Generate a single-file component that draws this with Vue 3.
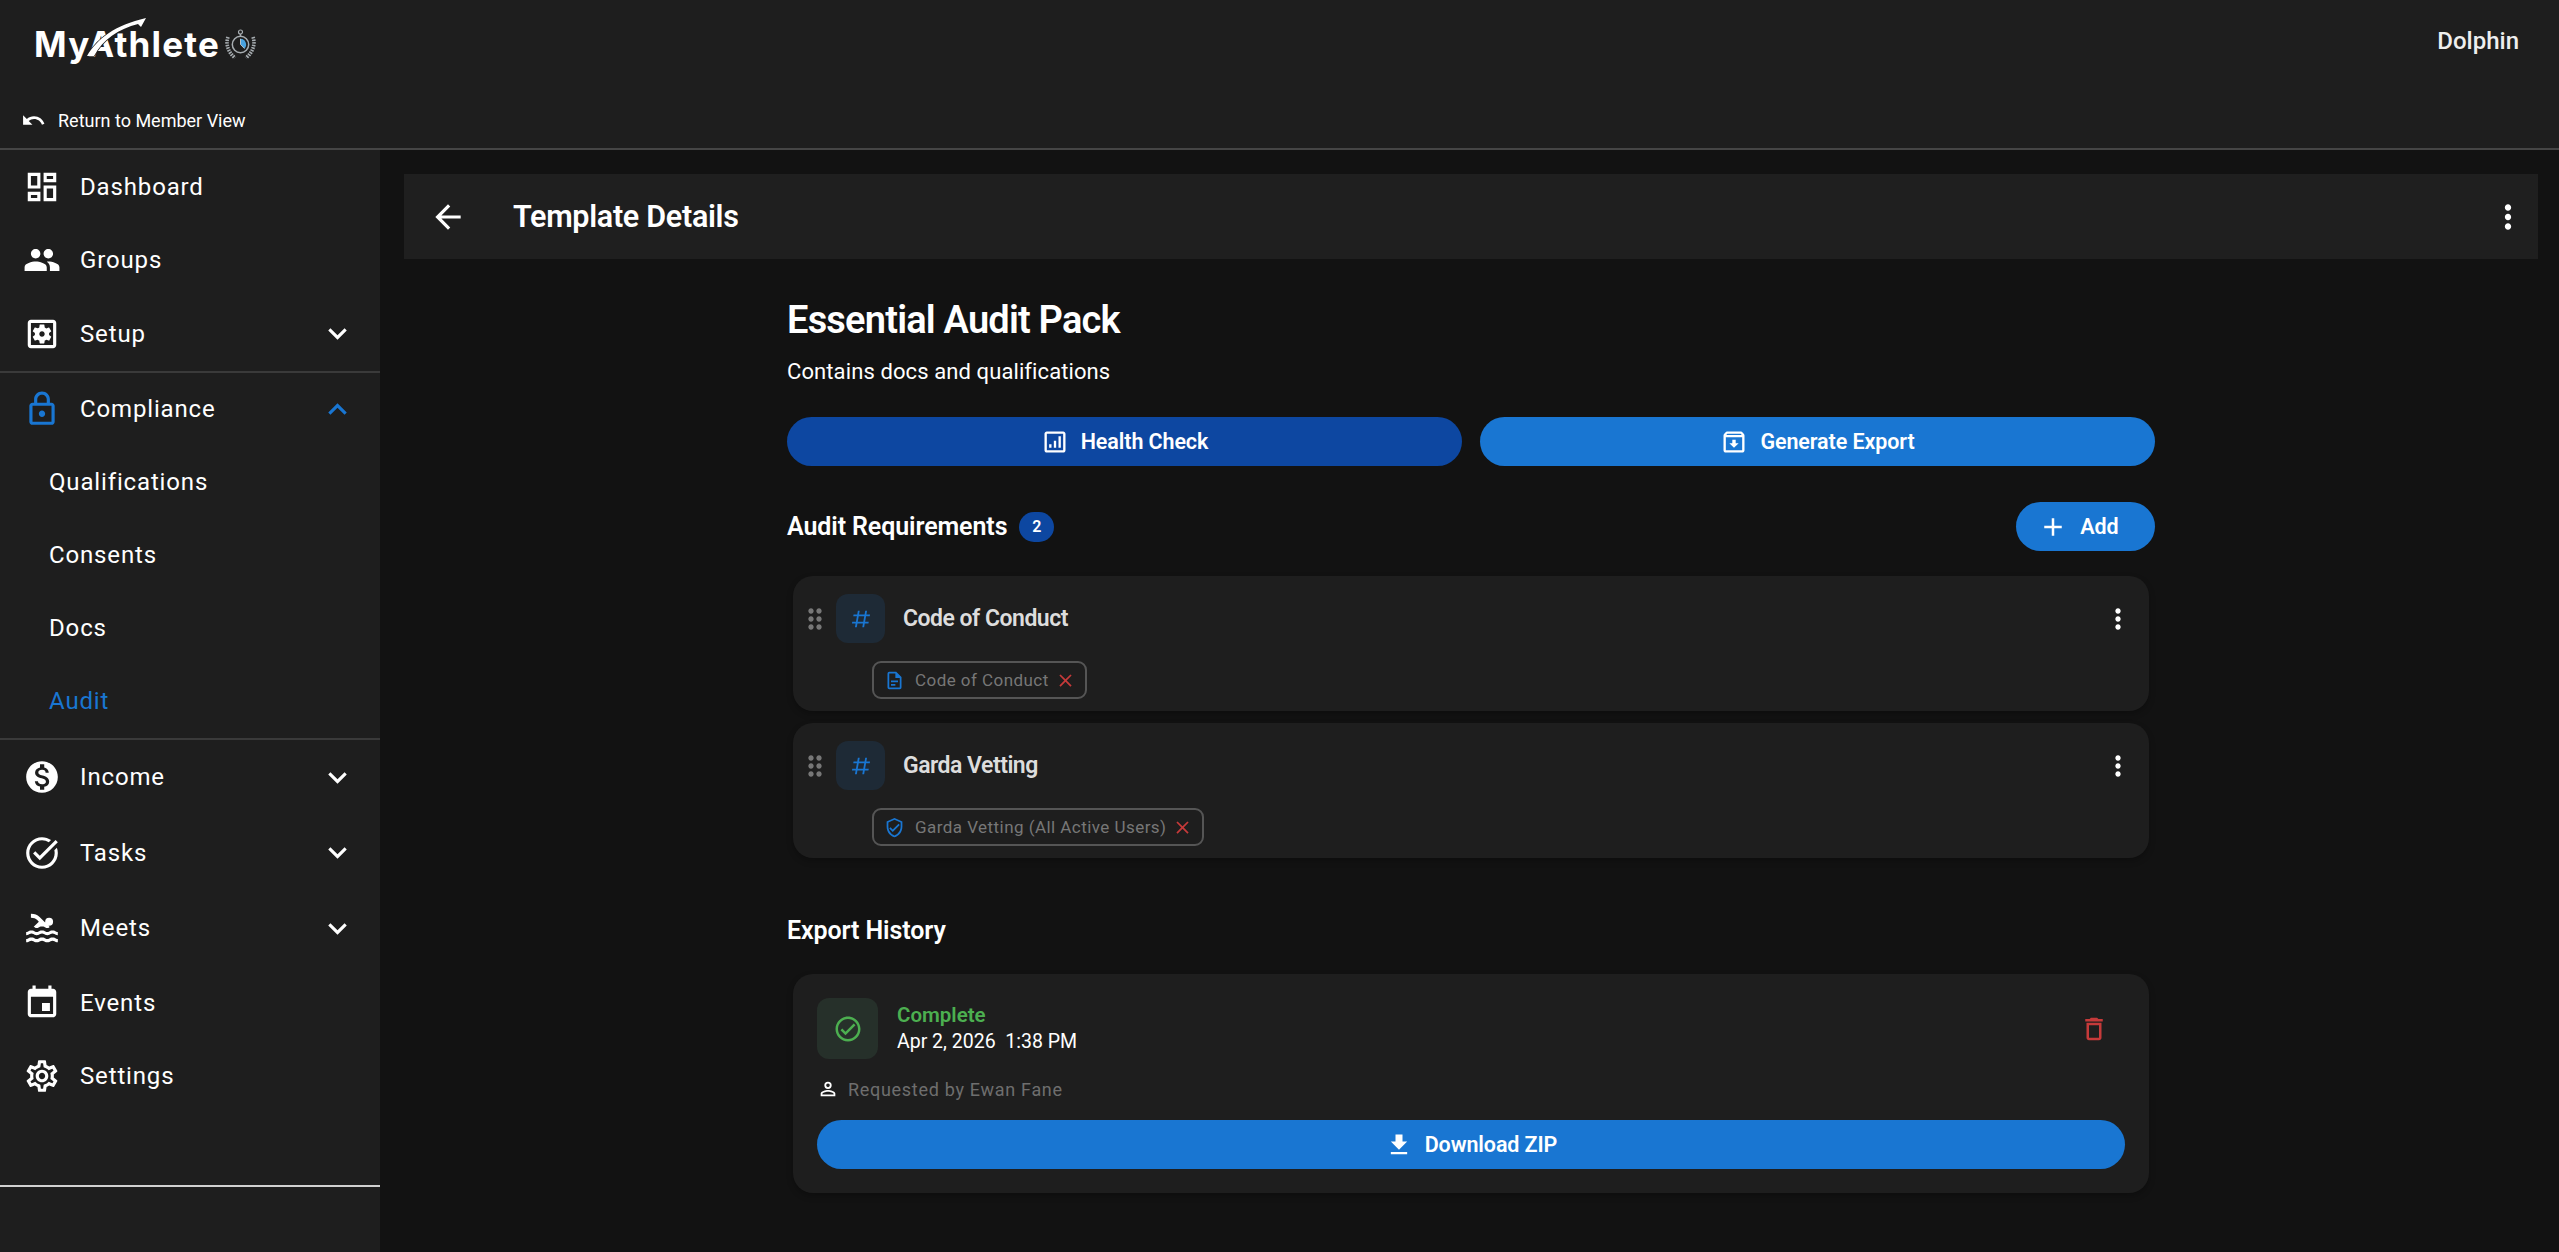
<template>
  <div class="app">
    <header class="topbar">
      <div class="brand-row">
        <div class="logo">
          <span class="logo-text">MyAthlete</span>
          <svg class="swoosh" viewBox="0 0 60 40"><path d="M0 39C10 22 28 8 59 1L54 10L51 7C32 12 16 22 7 39Z" fill="#fff" stroke="#1e1e1e" stroke-width="1.500" paint-order="stroke" /></svg>
          <svg class="watch" viewBox="0 0 31 31">
            <circle cx="15.500" cy="15.500" r="8.200" fill="none" stroke="#a7adb1" stroke-width="1.500" />
            <path d="M15.500 9.800V15.500L19.500 19.600A5.800 5.800 0 0 0 15.500 9.800Z" fill="#4aa3e0" />
            <path d="M15.500 9.800V15.500L19.500 19.600" fill="none" stroke="#d6dadd" stroke-width="0.800" />
            <circle cx="15.500" cy="3" r="2" fill="none" stroke="#a7adb1" stroke-width="1.200" />
            <path d="M15.500 5V7.300" stroke="#a7adb1" stroke-width="1.500" />
            <path d="M3 8C.5 15 3 23 10 29M28 8C30.500 15 28 23 21 29" fill="none" stroke="#a7adb1" stroke-width="3.600" stroke-dasharray="1.600 1" />
          </svg>
        </div>
        <div class="org">Dolphin</div>
      </div>
      <div class="return-row">
        <svg class="return-icon" viewBox="0 0 24 24"><path d="M12.500 8c-2.650 0-5.050.990-6.900 2.600L2 7v9h9l-3.620-3.620c1.390-1.160 3.160-1.880 5.120-1.880 3.540 0 6.550 2.310 7.600 5.500l2.370-.780C21.080 11.030 17.150 8 12.500 8z" /></svg>
        <span>Return to Member View</span>
      </div>
    </header>

    <div class="body">
      <aside class="sidebar">
        <nav class="nav">
          <div v-for="item in navItems" :key="item.label" :class="{ 'nav-group': item.open }">
            <div class="nav-item" :class="{ active: item.open, tall: item.tall }">
              <svg class="nav-icon" viewBox="0 0 24 24"><path :d="item.icon" /></svg>
              <span class="nav-label">{{ item.label }}</span>
              <svg v-if="item.chevron" class="nav-chevron" viewBox="0 0 24 24">
                <path :d="item.open ? chevronUp : chevronDown" />
              </svg>
            </div>
            <div v-for="child in item.children" :key="child" class="nav-child" :class="{ current: child === 'Audit' }">{{ child }}</div>
          </div>
        </nav>
        <div class="sidebar-rule"></div>
      </aside>

      <main class="main">
        <div class="page-bar">
          <svg class="back-icon" viewBox="0 0 24 24"><path d="M20 11H7.830l5.590-5.590L12 4l-8 8 8 8 1.410-1.410L7.830 13H20v-2z" /></svg>
          <h1 class="page-title">Template Details</h1>
          <svg class="bar-dots" viewBox="0 0 24 24"><path :d="dotsPath" /></svg>
        </div>

        <section class="content">
          <h2 class="pack-title">Essential Audit Pack</h2>
          <p class="pack-desc">Contains docs and qualifications</p>

          <div class="action-row">
            <button class="pill dark">
              <svg class="pill-icon" viewBox="0 0 24 24"><path d="M19 3H5c-1.100 0-2 .9-2 2v14c0 1.100.9 2 2 2h14c1.100 0 2-.9 2-2V5c0-1.100-.9-2-2-2zm0 16H5V5h14v14zM7 14h2v3H7zm4-3h2v6h-2zm4-4h2v10h-2z" /></svg>
              Health Check
            </button>
            <button class="pill">
              <svg class="pill-icon" viewBox="0 0 24 24"><path d="M20.540 5.230l-1.390-1.680C18.880 3.210 18.470 3 18 3H6c-.47 0-.88.21-1.160.55L3.460 5.230C3.170 5.570 3 6.020 3 6.500V19c0 1.100.9 2 2 2h14c1.100 0 2-.9 2-2V6.500c0-.48-.17-.93-.46-1.270zM6.240 5h11.520l.83 1H5.420l.82-1zM5 19V8h14v11H5zm8.450-9h-2.900v3H8l4 4 4-4h-2.550z" /></svg>
              Generate Export
            </button>
          </div>

          <div class="section-head">
            <h3 class="section-title">Audit Requirements</h3>
            <span class="count">2</span>
            <button class="pill add">
              <svg class="pill-icon" viewBox="0 0 24 24"><path d="M19 13h-6v6h-2v-6H5v-2h6V5h2v6h6v2z" /></svg>
              Add
            </button>
          </div>

          <div class="req-list">
            <div v-for="req in requirements" :key="req.name" class="card req">
              <div class="req-top">
                <svg class="drag" viewBox="0 0 24 24"><path d="M11 18c0 1.100-.9 2-2 2s-2-.9-2-2 .9-2 2-2 2 .9 2 2zm-2-8c-1.100 0-2 .9-2 2s.9 2 2 2 2-.9 2-2-.9-2-2-2zm0-6c-1.100 0-2 .9-2 2s.9 2 2 2 2-.9 2-2-.9-2-2-2zm6 4c1.100 0 2-.9 2-2s-.9-2-2-2-2 .9-2 2 .9 2 2 2zm0 2c-1.100 0-2 .9-2 2s.9 2 2 2 2-.9 2-2-.9-2-2-2zm0 6c-1.100 0-2 .9-2 2s.9 2 2 2 2-.9 2-2-.9-2-2-2z" /></svg>
                <div class="tag-box">
                  <svg viewBox="0 0 24 24"><path d="M5.410 21L6.120 17H2.120L2.470 15H6.470L7.530 9H3.530L3.880 7H7.880L8.590 3H10.590L9.880 7H15.880L16.590 3H18.590L17.880 7H21.880L21.530 9H17.530L16.470 15H20.470L20.120 17H16.120L15.410 21H13.410L14.120 17H8.120L7.410 21H5.410M9.530 9L8.470 15H14.470L15.530 9H9.530Z" /></svg>
                </div>
                <span class="req-name">{{ req.name }}</span>
                <svg class="dots" viewBox="0 0 24 24"><path :d="dotsPath" /></svg>
              </div>
              <div class="chip">
                <svg class="chip-icon" viewBox="0 0 24 24"><path :d="req.icon" /></svg>
                <span>{{ req.chip }}</span>
                <svg class="chip-close" viewBox="0 0 24 24"><path d="M19 6.410L17.590 5 12 10.590 6.410 5 5 6.410 10.590 12 5 17.590 6.410 19 12 13.410 17.590 19 19 17.590 13.410 12z" /></svg>
              </div>
            </div>
          </div>

          <h3 class="section-title export-title">Export History</h3>

          <div class="card export">
            <div class="export-top">
              <div class="status-box">
                <svg viewBox="0 0 24 24"><path d="M12 2C6.500 2 2 6.500 2 12S6.500 22 12 22 22 17.500 22 12 17.500 2 12 2M12 20C7.590 20 4 16.410 4 12S7.590 4 12 4 20 7.590 20 12 16.410 20 12 20M16.590 7.580L10 14.170L7.410 11.590L6 13L10 17L18 9L16.590 7.580Z" /></svg>
              </div>
              <div class="status-text">
                <div class="status">Complete</div>
                <div class="when">Apr 2, 2026&nbsp; 1:38 PM</div>
              </div>
              <svg class="trash" viewBox="0 0 24 24"><path d="M6 19c0 1.100.9 2 2 2h8c1.100 0 2-.9 2-2V7H6v12zM8 9h8v10H8V9zm7.500-5l-1-1h-5l-1 1H5v2h14V4z" /></svg>
            </div>
            <div class="requested">
              <svg viewBox="0 0 24 24"><path d="M12 4A4 4 0 0 1 16 8A4 4 0 0 1 12 12A4 4 0 0 1 8 8A4 4 0 0 1 12 4M12 6A2 2 0 0 0 10 8A2 2 0 0 0 12 10A2 2 0 0 0 14 8A2 2 0 0 0 12 6M12 13C14.670 13 20 14.330 20 17V20H4V17C4 14.330 9.330 13 12 13M12 14.900C9.030 14.900 5.900 16.360 5.900 17V18.100H18.100V17C18.100 16.360 14.970 14.900 12 14.900Z" /></svg>
              <span>Requested by Ewan Fane</span>
            </div>
            <button class="pill download">
              <svg class="pill-icon" viewBox="0 0 24 24"><path d="M5 20H19V18H5M19 9H15V3H9V9H5L12 16L19 9Z" /></svg>
              Download ZIP
            </button>
          </div>
        </section>
      </main>
    </div>
  </div>
</template>

<script setup>
const chevronDown = "M16.590 8.590L12 13.170 7.410 8.590 6 10l6 6 6-6z";
const chevronUp = "M12 8l-6 6 1.410 1.410L12 10.830l4.590 4.580L18 14z";
const dotsPath = "M12 8c1.100 0 2-.9 2-2s-.9-2-2-2-2 .9-2 2 .9 2 2 2zm0 2c-1.100 0-2 .9-2 2s.9 2 2 2 2-.9 2-2-.9-2-2-2zm0 6c-1.100 0-2 .9-2 2s.9 2 2 2 2-.9 2-2-.9-2-2-2z";

const navItems = [
  { label: "Dashboard", icon: "M19 5v2h-4V5h4M9 5v6H5V5h4m10 8v6h-4v-6h4M9 17v2H5v-2h4M21 3h-8v6h8V3zM11 3H3v10h8V3zm10 8h-8v10h8V11zm-10 4H3v6h8v-6z" },
  { label: "Groups", icon: "M16 11c1.660 0 2.990-1.340 2.990-3S17.660 5 16 5c-1.660 0-3 1.340-3 3s1.340 3 3 3zm-8 0c1.660 0 2.990-1.340 2.990-3S9.660 5 8 5C6.340 5 5 6.340 5 8s1.340 3 3 3zm0 2c-2.330 0-7 1.170-7 3.500V19h14v-2.500c0-2.330-4.670-3.500-7-3.500zm8 0c-.29 0-.62.02-.97.05 1.160.84 1.970 1.970 1.970 3.450V19h6v-2.500c0-2.330-4.670-3.500-7-3.500z" },
  { label: "Setup", chevron: true, icon: "M6.210 13.970l1.200 2.070c.08.13.23.18.37.13l1.490-.6c.31.24.64.44 1.010.59l.22 1.590c.03.14.15.25.3.25h2.400c.15 0 .27-.11.3-.25l.22-1.590c.36-.15.7-.35 1.010-.59l1.490.6c.14.05.29 0 .37-.13l1.200-2.070c.08-.13.04-.29-.07-.39l-1.270-.99c.03-.19.05-.39.05-.58 0-.2-.02-.39-.05-.58l1.270-.99c.11-.09.15-.26.07-.39l-1.200-2.070c-.08-.13-.23-.18-.37-.13l-1.490.6c-.31-.24-.64-.44-1.010-.59l-.22-1.590c-.03-.14-.15-.25-.3-.25h-2.400c-.15 0-.27.11-.3.25l-.22 1.590c-.36.15-.71.34-1.010.58l-1.490-.6c-.14-.05-.29 0-.37.13l-1.200 2.070c-.08.13-.04.29.07.39l1.270.99c-.03.19-.05.39-.05.58 0 .2.02.39.05.58l-1.270.99c-.11.1-.14.26-.06.39zM12 10.290c.94 0 1.710.77 1.710 1.710s-.77 1.710-1.710 1.710-1.710-.77-1.710-1.710.77-1.710 1.710-1.710zM19 3H5c-1.110 0-2 .9-2 2v14c0 1.100.89 2 2 2h14c1.110 0 2-.9 2-2V5c0-1.100-.89-2-2-2zm0 16H5V5h14v14z" },
  { label: "Compliance", chevron: true, open: true, children: ["Qualifications", "Consents", "Docs", "Audit"], icon: "M18 8h-1V6c0-2.760-2.240-5-5-5S7 3.240 7 6v2H6c-1.100 0-2 .9-2 2v10c0 1.100.9 2 2 2h12c1.100 0 2-.9 2-2V10c0-1.100-.9-2-2-2zM9 6c0-1.660 1.340-3 3-3s3 1.340 3 3v2H9V6zm9 14H6V10h12v10zm-6-3c1.100 0 2-.9 2-2s-.9-2-2-2-2 .9-2 2 .9 2 2 2z" },
  { label: "Income", chevron: true, tall: true, icon: "M12 2C6.480 2 2 6.480 2 12s4.480 10 10 10 10-4.480 10-10S17.520 2 12 2zm1.410 16.090V20h-2.670v-1.930c-1.710-.36-3.160-1.460-3.270-3.400h1.960c.1 1.050.82 1.870 2.650 1.870 1.960 0 2.400-.98 2.400-1.590 0-.83-.44-1.610-2.670-2.140-2.480-.6-4.180-1.620-4.180-3.670 0-1.720 1.390-2.840 3.110-3.210V4h2.670v1.950c1.860.45 2.790 1.860 2.860 3.390H14.300c-.05-1.110-.64-1.870-2.220-1.870-1.500 0-2.400.68-2.400 1.640 0 .84.65 1.390 2.670 1.910s4.180 1.390 4.180 3.910c-.01 1.830-1.380 2.830-3.120 3.160z" },
  { label: "Tasks", chevron: true, tall: true, icon: "M22 5.180L10.590 16.600l-4.240-4.240 1.410-1.410 2.830 2.830 10-10L22 5.180zm-2.210 5.040c.13.57.21 1.170.21 1.780 0 4.420-3.580 8-8 8s-8-3.580-8-8 3.580-8 8-8c1.580 0 3.040.46 4.280 1.250l1.440-1.440C16.100 2.670 14.130 2 12 2 6.480 2 2 6.480 2 12s4.480 10 10 10 10-4.480 10-10c0-1.190-.22-2.330-.6-3.390l-1.610 1.610z" },
  { label: "Meets", chevron: true, tall: true, icon: "M22 21c-1.110 0-1.730-.37-2.180-.64-.37-.22-.6-.36-1.150-.36-.56 0-.78.13-1.150.36-.46.27-1.070.64-2.180.64s-1.730-.37-2.180-.64c-.37-.22-.6-.36-1.150-.36-.56 0-.78.13-1.150.36-.46.27-1.080.64-2.190.64-1.110 0-1.730-.37-2.180-.64-.37-.23-.6-.36-1.150-.36s-.78.13-1.150.36c-.46.27-1.080.64-2.190.64v-2c.56 0 .78-.13 1.150-.36.46-.27 1.080-.64 2.190-.64s1.730.37 2.180.64c.37.23.59.36 1.150.36.56 0 .78-.13 1.150-.36.46-.27 1.080-.64 2.190-.64 1.110 0 1.730.37 2.180.64.37.22.6.36 1.150.36s.78-.13 1.150-.36c.45-.27 1.070-.64 2.180-.64s1.730.37 2.180.64c.37.23.59.36 1.150.36v2zm0-4.500c-1.110 0-1.730-.37-2.180-.64-.37-.22-.6-.36-1.150-.36-.56 0-.78.13-1.150.36-.45.27-1.070.64-2.180.64s-1.730-.37-2.180-.64c-.37-.22-.6-.36-1.150-.36-.56 0-.78.13-1.150.36-.45.27-1.070.64-2.180.64s-1.730-.37-2.180-.64c-.37-.22-.6-.36-1.150-.36s-.78.13-1.150.36c-.47.27-1.090.64-2.200.64v-2c.56 0 .78-.13 1.150-.36.45-.27 1.070-.64 2.180-.64s1.730.37 2.180.64c.37.22.6.36 1.150.36.56 0 .78-.13 1.150-.36.45-.27 1.070-.64 2.180-.64s1.730.37 2.180.64c.37.22.6.36 1.150.36s.78-.13 1.150-.36c.45-.27 1.070-.64 2.180-.64s1.730.37 2.180.64c.37.22.6.36 1.150.36v2zM8.670 12c.56 0 .78-.13 1.150-.36.46-.27 1.080-.64 2.190-.64 1.110 0 1.730.37 2.180.64.37.22.6.36 1.150.36s.78-.13 1.150-.36c.12-.07.26-.15.41-.23L10.480 5C8.930 3.450 7.500 2.990 5 3v2.500c1.820-.01 2.890.39 4 1.500l1 1-3.250 3.250c.31.12.56.27.77.39.37.23.59.36 1.150.36zM14 8a2.500 2.500 0 1 0 5 0 2.500 2.500 0 1 0-5 0z" },
  { label: "Events", icon: "M17 12h-5v5h5v-5zM16 1v2H8V1H6v2H5c-1.110 0-1.990.9-1.990 2L3 19c0 1.100.89 2 2 2h14c1.100 0 2-.9 2-2V5c0-1.100-.9-2-2-2h-1V1h-2zm3 18H5V8h14v11z" },
  { label: "Settings", icon: "M19.430 12.980c.04-.32.07-.64.07-.98 0-.34-.03-.66-.07-.98l2.110-1.650c.19-.15.24-.42.12-.64l-2-3.460c-.09-.16-.26-.25-.44-.25-.06 0-.12.01-.17.03l-2.490 1c-.52-.4-1.080-.73-1.690-.98l-.38-2.650C14.460 2.180 14.250 2 14 2h-4c-.25 0-.46.18-.49.42l-.38 2.650c-.61.25-1.170.59-1.690.98l-2.490-1c-.06-.02-.12-.03-.18-.03-.17 0-.34.09-.43.25l-2 3.460c-.13.22-.07.49.12.64l2.110 1.650c-.04.32-.07.65-.07.98 0 .33.03.66.07.98l-2.110 1.650c-.19.15-.24.42-.12.64l2 3.460c.09.16.26.25.44.25.06 0 .12-.01.17-.03l2.490-1c.52.4 1.080.73 1.690.98l.38 2.650c.03.24.24.42.49.42h4c.25 0 .46-.18.49-.42l.38-2.650c.61-.25 1.170-.59 1.690-.98l2.490 1c.06.02.12.03.18.03.17 0 .34-.09.43-.25l2-3.460c.12-.22.07-.49-.12-.64l-2.110-1.650zm-1.980-1.710c.04.31.05.52.05.73 0 .21-.02.43-.05.73l-.14 1.130.89.7 1.080.84-.7 1.210-1.270-.51-1.040-.42-.9.68c-.43.32-.84.56-1.250.73l-1.060.43-.16 1.130-.2 1.350h-1.400l-.19-1.350-.16-1.130-1.060-.43c-.43-.18-.83-.41-1.230-.71l-.91-.7-1.060.43-1.270.51-.7-1.210 1.080-.84.89-.7-.14-1.130c-.03-.31-.05-.54-.05-.74s.02-.43.05-.73l.14-1.130-.89-.7-1.080-.84.7-1.210 1.270.51 1.040.42.9-.68c.43-.32.84-.56 1.250-.73l1.060-.43.16-1.130.2-1.350h1.390l.19 1.350.16 1.130 1.060.43c.43.18.83.41 1.230.71l.91.7 1.060-.43 1.270-.51.7 1.210-1.070.85-.89.7.14 1.130zM12 8c-2.210 0-4 1.790-4 4s1.790 4 4 4 4-1.790 4-4-1.790-4-4-4zm0 6c-1.100 0-2-.9-2-2s.9-2 2-2 2 .9 2 2-.9 2-2 2z" },
];

const requirements = [
  {
    name: "Code of Conduct",
    chip: "Code of Conduct",
    icon: "M6 2A2 2 0 0 0 4 4V20A2 2 0 0 0 6 22H18A2 2 0 0 0 20 20V8L14 2H6M6 4H13V9H18V20H6V4M8 12V14H16V12H8M8 16V18H13V16H8Z",
  },
  {
    name: "Garda Vetting",
    chip: "Garda Vetting (All Active Users)",
    icon: "M21 11C21 16.550 17.160 21.740 12 23C6.840 21.740 3 16.550 3 11V5L12 1L21 5V11M12 21C15.750 20 19 15.540 19 11.220V6.300L12 3.180L5 6.300V11.220C5 15.540 8.250 20 12 21M10 17L6 13L7.410 11.590L10 14.170L16.590 7.580L18 9",
  },
];
</script>

<style>
html,
body {
  margin: 0;
  background: #121212;
}
</style>

<style scoped>
.app {
  height: 1252px;
  display: flex;
  flex-direction: column;
  overflow: hidden;
  font-family: Roboto, "Liberation Sans", sans-serif;
  color: #fff;
  background: #121212;
}

.topbar {
  height: 150px;
  flex: none;
  box-sizing: border-box;
  background: #1e1e1e;
  border-bottom: 2px solid #454545;
  padding: 22px 0 0 21px;
}

.brand-row {
  display: flex;
  align-items: flex-start;
  justify-content: space-between;
  padding-right: 40px;
}

.logo {
  position: relative;
  display: flex;
  align-items: center;
  margin-left: 13px;
  height: 44px;
}

.logo-text {
  font-family: Inter, "Liberation Sans", sans-serif;
  font-weight: 700;
  font-size: 35px;
  letter-spacing: 1.200px;
  line-height: 44px;
}

.swoosh {
  position: absolute;
  left: 53px;
  top: -5px;
  width: 60px;
  height: 40px;
}

.watch {
  width: 31px;
  height: 31px;
  margin-left: 5px;
}

.org {
  font-size: 24px;
  font-weight: 500;
  line-height: 38px;
  color: #eee;
}

.return-row {
  display: flex;
  align-items: center;
  gap: 12px;
  margin-top: 42px;
  font-size: 18px;
  line-height: 24px;
}

.return-icon {
  width: 25px;
  height: 25px;
  fill: #fff;
}

.body {
  flex: 1;
  display: flex;
  min-height: 0;
}

.sidebar {
  width: 380px;
  flex: none;
  background: #1e1e1e;
}

.nav-item {
  height: 73.500px;
  display: flex;
  align-items: center;
  padding: 0 24px 0 23px;
}

.nav-item.tall {
  height: 75.500px;
}

.nav-icon {
  width: 38px;
  height: 38px;
  fill: #fff;
  flex: none;
}

.nav-label {
  margin-left: 19px;
  font-size: 24px;
  letter-spacing: 0.850px;
  flex: 1;
}

.nav-chevron {
  width: 37px;
  height: 37px;
  fill: #fff;
}

.nav-group {
  border-top: 2px solid #3a3a3a;
  border-bottom: 2px solid #3a3a3a;
}

.nav-group .nav-item {
  height: 73px;
}

.active .nav-icon,
.active .nav-chevron {
  fill: #1976d2;
}

.nav-child {
  height: 73px;
  display: flex;
  align-items: center;
  padding-left: 49px;
  font-size: 24px;
  letter-spacing: 0.850px;
}

.nav-child.current {
  color: #1976d2;
}

.sidebar-rule {
  height: 2px;
  background: #d0d0d0;
  margin-top: 72px;
}

.main {
  flex: 1;
  min-width: 0;
  padding: 24px 21px 0 24px;
}

.page-bar {
  height: 85px;
  display: flex;
  align-items: center;
  background: #1f1f1f;
  padding: 0 11px 0 25px;
}

.back-icon {
  width: 38px;
  height: 38px;
  fill: #fff;
  flex: none;
}

.page-title {
  margin: 0 0 0 46px;
  flex: 1;
  font-size: 30.500px;
  font-weight: 600;
  letter-spacing: -0.300px;
}

.bar-dots {
  width: 38px;
  height: 38px;
  fill: #fff;
}

.content {
  width: 1368px;
  margin: 0 auto;
}

.pack-title {
  margin: 36px 0 0;
  font-size: 38px;
  line-height: 50px;
  font-weight: 600;
  letter-spacing: -0.800px;
}

.pack-desc {
  margin: 12px 0 0;
  font-size: 22px;
  line-height: 30px;
  letter-spacing: 0.100px;
}

.action-row {
  display: flex;
  gap: 18px;
  margin-top: 30px;
}

.pill {
  height: 49px;
  flex: 1;
  display: flex;
  align-items: center;
  justify-content: center;
  gap: 12px;
  border: 0;
  border-radius: 25px;
  background: #1976d2;
  color: #fff;
  font-family: inherit;
  font-size: 21.500px;
  font-weight: 600;
  letter-spacing: -0.100px;
}

.pill.dark {
  background: #0d47a1;
}

.pill-icon {
  width: 28px;
  height: 28px;
  fill: #fff;
  flex: none;
}

.section-head {
  display: flex;
  align-items: center;
  margin-top: 36px;
  height: 49px;
}

.section-title {
  margin: 0;
  font-size: 25px;
  font-weight: 600;
  letter-spacing: -0.100px;
}

.count {
  width: 35px;
  height: 30px;
  margin-left: 12px;
  border-radius: 15px;
  background: #0d47a1;
  display: flex;
  align-items: center;
  justify-content: center;
  font-size: 16px;
  font-weight: 600;
}

.pill.add {
  flex: none;
  width: 139px;
  margin-left: auto;
  padding: 0 14px 0 0;
}

.pill.add .pill-icon {
  width: 30px;
  height: 30px;
}

.req-list {
  display: flex;
  flex-direction: column;
  gap: 12px;
  margin: 25px 6px 0;
}

.card {
  background: #1e1e1e;
  border-radius: 20px;
  box-shadow: 0 3px 6px rgba(0, 0, 0, 0.25);
}

.req {
  height: 135px;
  box-sizing: border-box;
  padding: 18px 15px 0 6px;
}

.req-top {
  display: flex;
  align-items: center;
  height: 49px;
}

.drag {
  width: 32px;
  height: 32px;
  fill: #777;
  flex: none;
}

.tag-box {
  width: 49px;
  height: 49px;
  margin-left: 5px;
  border-radius: 12px;
  background: #1e2a36;
  display: flex;
  align-items: center;
  justify-content: center;
}

.tag-box svg {
  width: 22px;
  height: 22px;
  fill: #1976d2;
}

.req-name {
  margin-left: 18px;
  flex: 1;
  font-size: 23px;
  font-weight: 600;
  color: #ddd;
  letter-spacing: -0.500px;
}

.dots {
  width: 32px;
  height: 32px;
  fill: #fff;
}

.chip {
  display: inline-flex;
  align-items: center;
  height: 38px;
  box-sizing: border-box;
  margin: 18px 0 0 73px;
  padding: 0 9px 0 10px;
  border: 2px solid #555;
  border-radius: 9px;
  font-size: 17px;
  letter-spacing: 0.450px;
  color: #777;
}

.chip-icon {
  width: 21px;
  height: 21px;
  fill: #1976d2;
  margin-right: 10px;
}

.chip-close {
  width: 21px;
  height: 21px;
  fill: #c63a3a;
  margin-left: 6px;
}

.export-title {
  margin-top: 54px;
  line-height: 38px;
}

.export {
  margin: 24px 6px 0;
  height: 219px;
  box-sizing: border-box;
  padding: 24px;
}

.export-top {
  display: flex;
  align-items: center;
}

.status-box {
  width: 61px;
  height: 61px;
  border-radius: 12px;
  background: #26302a;
  display: flex;
  align-items: center;
  justify-content: center;
}

.status-box svg {
  width: 30px;
  height: 30px;
  fill: #4caf50;
}

.status-text {
  margin-left: 19px;
  flex: 1;
}

.status {
  font-size: 20.500px;
  font-weight: 600;
  color: #4caf50;
  line-height: 26px;
}

.when {
  font-size: 19.500px;
  line-height: 28px;
}

.trash {
  width: 30px;
  height: 30px;
  fill: #c63a3a;
  margin-right: 16px;
}

.requested {
  display: flex;
  align-items: center;
  margin-top: 15px;
  height: 30px;
  font-size: 18px;
  letter-spacing: 0.700px;
  color: #6e6e6e;
}

.requested svg {
  width: 22px;
  height: 22px;
  fill: #fff;
  margin-right: 9px;
}

.pill.download {
  width: 100%;
  margin-top: 16px;
}
</style>
